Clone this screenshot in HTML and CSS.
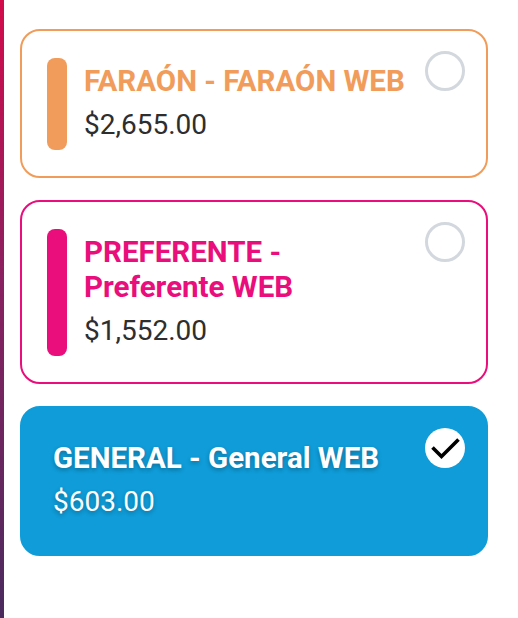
FILE: index.html
```html
<!DOCTYPE html>
<html lang="es">
<head>
<meta charset="utf-8">
<title>Zonas</title>
<link rel="stylesheet" href="styles.css">
</head>
<body>
<div class="layout">
  <div class="strip"></div>
  <main class="list">
    <div class="card card-orange">
      <div class="info">
        <span class="bar"></span>
        <div class="text">
          <div class="title">FARAÓN - FARAÓN WEB</div>
          <div class="price">$2,655.00</div>
        </div>
      </div>
      <span class="radio"></span>
    </div>
    <div class="card card-pink">
      <div class="info">
        <span class="bar"></span>
        <div class="text">
          <div class="title">PREFERENTE - Preferente WEB</div>
          <div class="price">$1,552.00</div>
        </div>
      </div>
      <span class="radio"></span>
    </div>
    <div class="card card-selected">
      <div class="info">
        <div class="text">
          <div class="title">GENERAL - General WEB</div>
          <div class="price">$603.00</div>
        </div>
      </div>
      <span class="radio radio-checked">
        <svg viewBox="0 0 40 40" width="40" height="40"><polyline points="7.5,19.5 16.5,28.5 33.5,11.5" fill="none" stroke="#000" stroke-width="3.6" stroke-linecap="butt" stroke-linejoin="miter"/></svg>
      </span>
    </div>
  </main>
</div>
</body>
</html>
```
FILE: styles.css
```css
* { box-sizing: border-box; }
html, body { margin: 0; padding: 0; background: #fff; }
body { font-family: Roboto, "Liberation Sans", Arial, sans-serif; }
.layout { display: flex; min-height: 618px; }
.strip { width: 4px; flex: none; background: linear-gradient(180deg, #d30b4b 0%, #8a2160 45%, #4a2b5e 100%); }
.list { flex: 1; padding: 29px 30px 0 16px; display: flex; flex-direction: column; gap: 22px; }
.card { display: flex; align-items: flex-start; justify-content: space-between; border: 2px solid; border-radius: 20px; padding: 20px 21px 20px 25px; background: #fff; }
.card-orange { border-color: #f19c5a; color: #f19c5a; }
.card-pink { border-color: #e90e7b; color: #e90e7b; }
.card-selected { background: #0f9cd8; border-color: #0f9cd8; color: #fff; padding: 20px 21px 21px 31px; }
.info { display: flex; gap: 17px; margin: 7px 0 6px; flex: 1; min-width: 0; }
.bar { width: 20px; flex: none; border-radius: 8px; background: currentColor; }
.text { padding: 6px 10px 7px 0; }
.title { font-size: 29.5px; font-weight: 700; line-height: 35px; }
.price { margin-top: 8px; font-size: 28px; line-height: 36px; color: #2e2e2e; }
.card-selected .title, .card-selected .price { color: #fff; text-shadow: 0 2px 4px rgba(0,0,0,0.28); }
.radio { width: 40px; height: 40px; flex: none; border-radius: 50%; border: 3px solid #d3d8de; background: #fff; }
.radio-checked { border: none; display: block; }
.radio-checked svg { display: block; }
```
